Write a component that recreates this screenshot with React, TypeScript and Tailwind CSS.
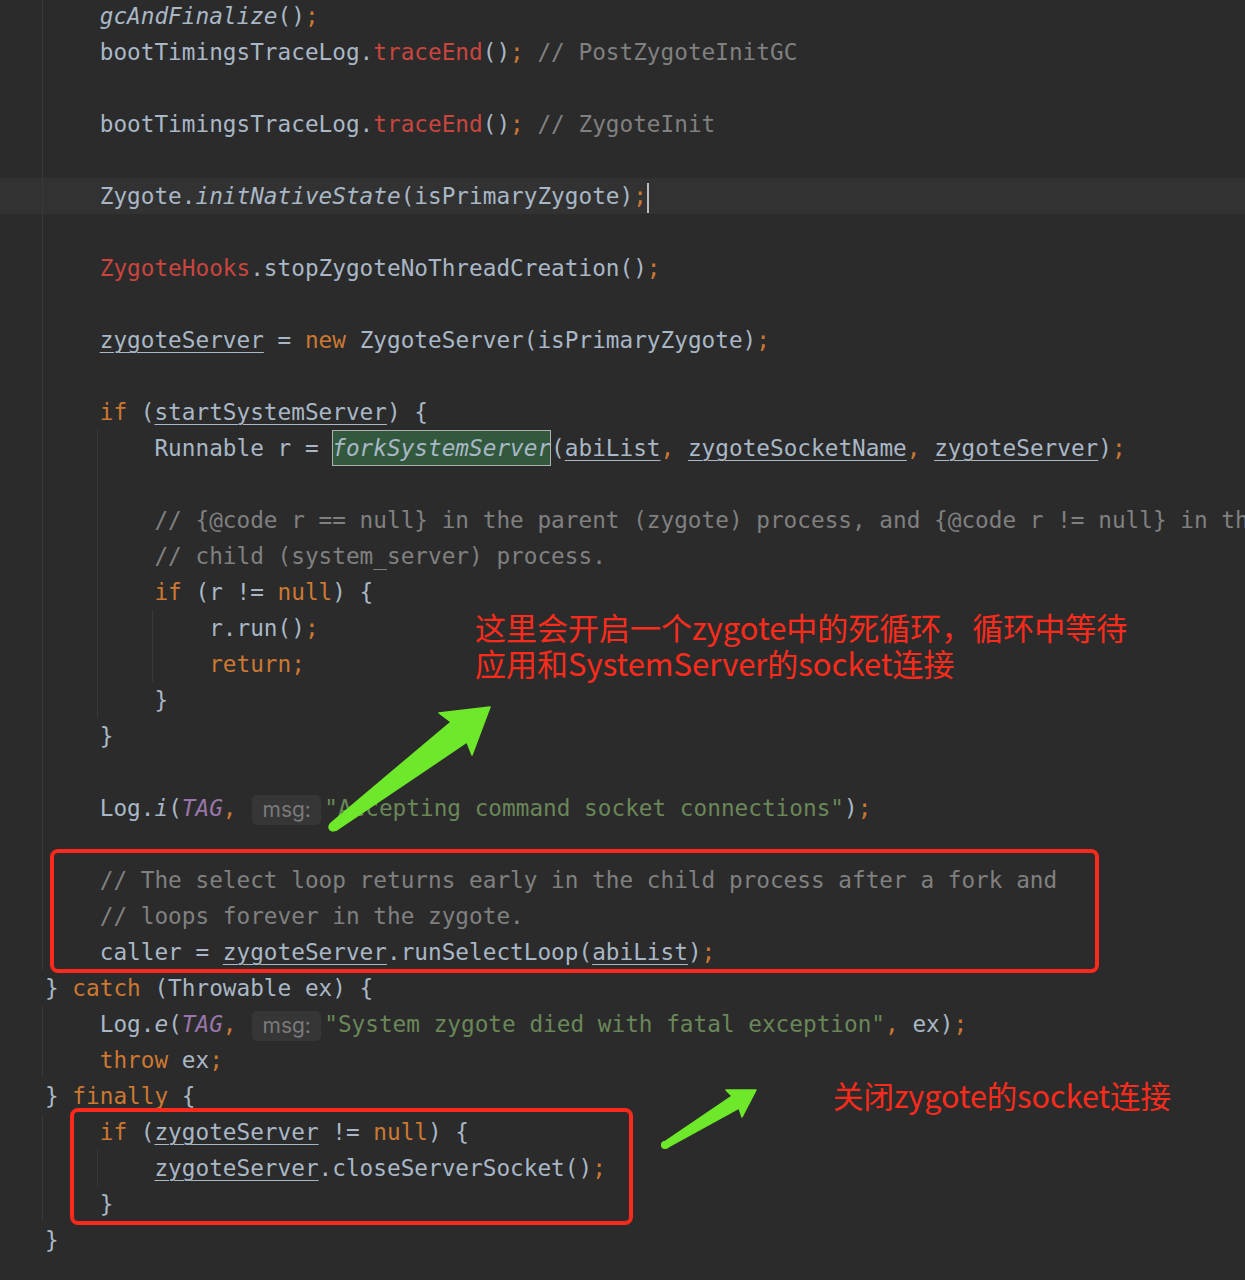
import React from "react";

type Tok = [string, string];

const C: Record<string, string> = {
  d: "text-[#a9b7c6]",
  k: "text-[#cc7832]",
  c: "text-[#808080]",
  s: "text-[#6a8759]",
  r: "text-[#c9453e]",
  i: "text-[#a9b7c6] italic",
  p: "text-[#9876aa] italic",
  u: "text-[#a9b7c6] underline decoration-1 underline-offset-[4px]",
  f: "inline-block h-[36px] align-top text-[#a9b7c6] italic bg-[#32593d] shadow-[inset_0_0_0_1px_#b0b0b0]",
};

const I1 = "";
const I2 = "    ";
const I3 = "        ";
const I4 = "            ";

const lines: Tok[][] = [
  [["d", I2], ["i", "gcAndFinalize"], ["d", "()"], ["k", ";"]],
  [["d", I2 + "bootTimingsTraceLog."], ["r", "traceEnd"], ["d", "()"], ["k", ";"], ["c", " // PostZygoteInitGC"]],
  [],
  [["d", I2 + "bootTimingsTraceLog."], ["r", "traceEnd"], ["d", "()"], ["k", ";"], ["c", " // ZygoteInit"]],
  [],
  [["d", I2 + "Zygote."], ["i", "initNativeState"], ["d", "(isPrimaryZygote)"], ["k", ";"], ["cur", ""]],
  [],
  [["d", I2], ["r", "ZygoteHooks"], ["d", ".stopZygoteNoThreadCreation()"], ["k", ";"]],
  [],
  [["d", I2], ["u", "zygoteServer"], ["d", " = "], ["k", "new"], ["d", " ZygoteServer(isPrimaryZygote)"], ["k", ";"]],
  [],
  [["d", I2], ["k", "if"], ["d", " ("], ["u", "startSystemServer"], ["d", ") {"]],
  [["d", I3 + "Runnable r = "], ["f", "forkSystemServer"], ["d", "("], ["u", "abiList"], ["k", ","], ["d", " "], ["u", "zygoteSocketName"], ["k", ","], ["d", " "], ["u", "zygoteServer"], ["d", ")"], ["k", ";"]],
  [],
  [["d", I3], ["c", "// {@code r == null} in the parent (zygote) process, and {@code r != null} in the"]],
  [["d", I3], ["c", "// child (system_server) process."]],
  [["d", I3], ["k", "if"], ["d", " (r != "], ["k", "null"], ["d", ") {"]],
  [["d", I4 + "r.run()"], ["k", ";"]],
  [["d", I4], ["k", "return;"]],
  [["d", I3 + "}"]],
  [["d", I2 + "}"]],
  [],
  [["d", I2 + "Log."], ["i", "i"], ["d", "("], ["p", "TAG"], ["k", ","], ["d", " "], ["h", "msg:"], ["s", "\"Accepting command socket connections\""], ["d", ")"], ["k", ";"]],
  [],
  [["d", I2], ["c", "// The select loop returns early in the child process after a fork and"]],
  [["d", I2], ["c", "// loops forever in the zygote."]],
  [["d", I2 + "caller = "], ["u", "zygoteServer"], ["d", ".runSelectLoop("], ["u", "abiList"], ["d", ")"], ["k", ";"]],
  [["d", I1 + "} "], ["k", "catch"], ["d", " (Throwable ex) {"]],
  [["d", I2 + "Log."], ["i", "e"], ["d", "("], ["p", "TAG"], ["k", ","], ["d", " "], ["h", "msg:"], ["s", "\"System zygote died with fatal exception\""], ["k", ","], ["d", " ex)"], ["k", ";"]],
  [["d", I2], ["k", "throw"], ["d", " ex"], ["k", ";"]],
  [["d", I1 + "} "], ["k", "finally"], ["d", " {"]],
  [["d", I2], ["k", "if"], ["d", " ("], ["u", "zygoteServer"], ["d", " != "], ["k", "null"], ["d", ") {"]],
  [["d", I3], ["u", "zygoteServer"], ["d", ".closeServerSocket()"], ["k", ";"]],
  [["d", I2 + "}"]],
  [["d", I1 + "}"]],
];

function Token({ t }: { t: Tok }) {
  const [type, text] = t;
  if (type === "h") {
    return (
      <span
        className="ml-[2px] mr-[3px] inline-block h-[30px] w-[69px] rounded-[5px] bg-[#363636] text-center align-middle text-[21px] not-italic leading-[30px] text-[#7a7a7a]"
        style={{ fontFamily: "Inter, 'Liberation Sans', sans-serif" }}
      >
        {text}
      </span>
    );
  }
  if (type === "cur") {
    return <span className="inline-block h-[30px] w-[2px] bg-[#bbbbbb] align-middle" />;
  }
  return <span className={C[type]}>{text}</span>;
}

export default function App() {
  return (
    <div className="relative h-[1280px] w-full overflow-hidden bg-[#2b2b2b]">
      <div
        className="mt-[-2px] text-[22.72px]"
        style={{ fontFamily: "'DejaVu Sans Mono', monospace" }}
      >
        {lines.map((ln, idx) => (
          <div
            key={idx}
            className={
              "h-[36px] whitespace-pre pl-[45px] leading-[36px] " +
              (idx === 5 ? "bg-[#323232]" : "")
            }
          >
            {ln.map((t, j) => (
              <Token key={j} t={t} />
            ))}
          </div>
        ))}
      </div>

      {/* indent guides */}
      <svg className="pointer-events-none absolute left-0 top-0" width="1245" height="1280">
        <g stroke="#393939" strokeWidth="1">
          <line x1="42.5" y1="0" x2="42.5" y2="970" />
          <line x1="42.5" y1="1006" x2="42.5" y2="1078" />
          <line x1="42.5" y1="1114" x2="42.5" y2="1222" />
          <line x1="97.5" y1="430" x2="97.5" y2="718" />
          <line x1="97.5" y1="1150" x2="97.5" y2="1186" />
          <line x1="152.5" y1="610" x2="152.5" y2="682" />
        </g>
      </svg>

      {/* annotation boxes */}
      <div className="pointer-events-none absolute left-[50px] top-[849px] h-[124px] w-[1049px] rounded-[8px] border-[4px] border-[#fb2a1c]" />
      <div className="pointer-events-none absolute left-[70px] top-[1108px] h-[117px] w-[563px] rounded-[8px] border-[4px] border-[#fb2a1c]" />

      {/* annotation texts */}
      <div
        className="absolute left-[475px] top-[609px] whitespace-pre text-[31px] leading-[36px] text-[#fc2b1c]"
        style={{ fontFamily: "'Noto Sans CJK SC', 'Noto Sans', sans-serif" }}
      >
        <div>这里会开启一个zygote中的死循环，循环中等待</div>
        <div>应用和SystemServer的socket连接</div>
      </div>
      <div
        className="absolute left-[833px] top-[1077px] whitespace-pre text-[30.5px] leading-[36px] text-[#fc2b1c]"
        style={{ fontFamily: "'Noto Sans CJK SC', 'Noto Sans', sans-serif" }}
      >
        关闭zygote的socket连接
      </div>

      {/* arrows */}
      <svg className="pointer-events-none absolute left-0 top-0" width="1245" height="1280">
        <g fill="#6ee82a" stroke="#6ee82a" strokeWidth="1.5" strokeLinejoin="round">
          <polygon points="330.5,823.5 451,722 439,713 490,707 472,755 467,742 336,830.5" />
          <circle cx="333" cy="827" r="4" />
          <polygon points="663.5,1142.5 732,1096 726,1090 756,1090 742,1117 739,1108 667,1147.5" />
          <circle cx="665" cy="1145" r="3.3" />
        </g>
      </svg>
    </div>
  );
}
